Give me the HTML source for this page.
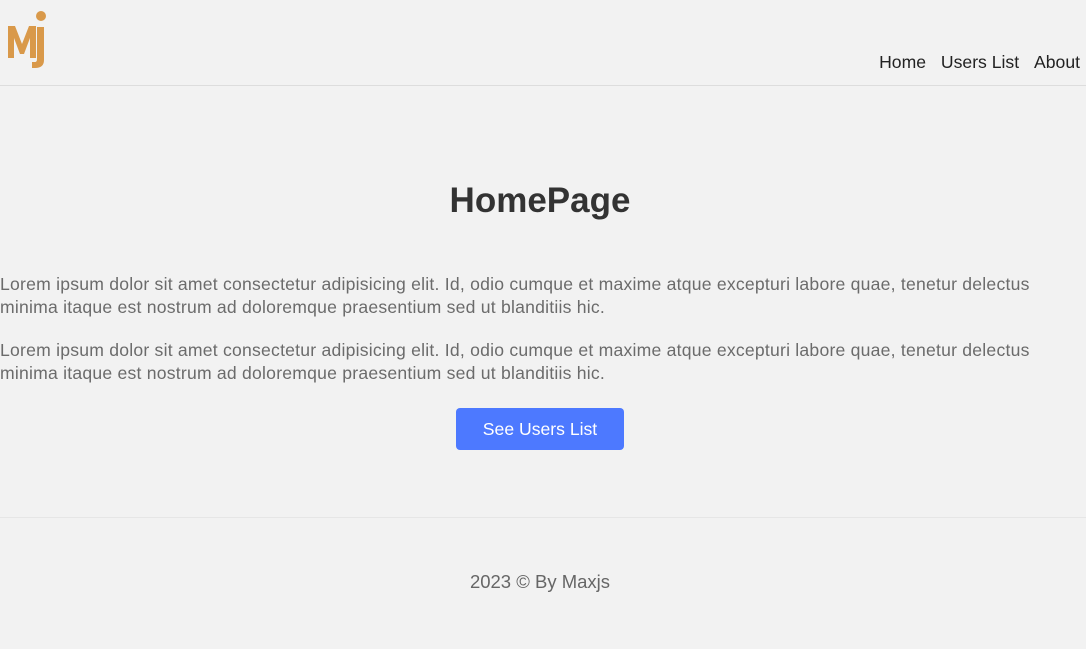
<!DOCTYPE html>
<html><head><style>
html,body{margin:0;padding:0;background:#f2f2f2;font-family:"Liberation Sans",sans-serif;}
body{width:1086px;height:649px;overflow:hidden;position:relative}
header{position:absolute;top:0;left:0;width:1086px;height:85px;border-bottom:1px solid #ddd}
.logo{position:absolute;left:7px;top:10px;width:44px;height:60px}
nav{position:absolute;top:52px;right:6px;font-size:17.6px;color:#222}
nav span{margin-left:10px}
h1{position:absolute;top:181px;left:0;width:1080px;text-align:center;margin:0;font-size:35px;color:#333;font-weight:bold;line-height:40px}
p{position:absolute;left:0;width:1045px;margin:0;font-size:17.6px;letter-spacing:0.22px;line-height:23px;color:#6b6b6b}
.btn{position:absolute;left:456px;top:408px;width:168px;height:42px;background:#4d79ff;color:#fff;border-radius:4px;text-align:center;line-height:42px;font-size:17.6px}
.hr{position:absolute;top:517px;left:0;width:1086px;border-top:1px solid #e6e6e6}
.foot{position:absolute;top:571px;left:0;width:1080px;text-align:center;font-size:18.5px;color:#666}
</style></head><body>
<header>
<svg class="logo" viewBox="0 0 44 60">
<circle cx="34" cy="6" r="5" fill="#d9994a"/>
<path d="M1 48 V16 H8 L15 34 L22 16 H29 V48 H23 V28 L17 44 H13 L7 28 V48 Z" fill="#d9994a"/>
<path d="M30 17 H37 V50 Q37 58 28 58 H25 V52 H28 Q30 52 30 49 Z" fill="#d9994a"/>
</svg>
<nav><span>Home</span> <span>Users List</span> <span>About</span></nav>
</header>
<h1>HomePage</h1>
<p style="top:273px">Lorem ipsum dolor sit amet consectetur adipisicing elit. Id, odio cumque et maxime atque excepturi labore quae, tenetur delectus minima itaque est nostrum ad doloremque praesentium sed ut blanditiis hic.</p>
<p style="top:339px">Lorem ipsum dolor sit amet consectetur adipisicing elit. Id, odio cumque et maxime atque excepturi labore quae, tenetur delectus minima itaque est nostrum ad doloremque praesentium sed ut blanditiis hic.</p>
<div class="btn">See Users List</div>
<div class="hr"></div>
<div class="foot">2023 © By Maxjs</div>
</body></html>
